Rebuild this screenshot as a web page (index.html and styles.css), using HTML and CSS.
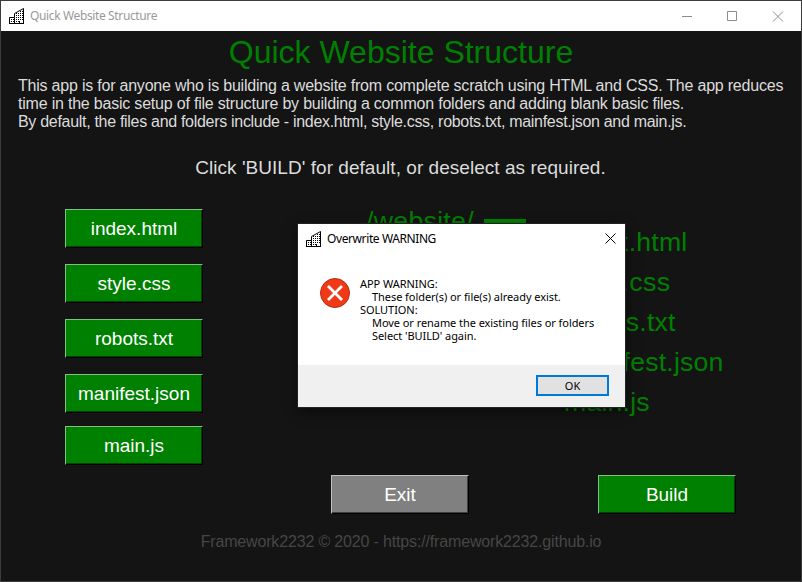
FILE: index.html
```html
<!DOCTYPE html>
<html lang="en">
<head>
<meta charset="utf-8">
<title>Quick Website Structure</title>
<link rel="stylesheet" href="styles.css">
</head>
<body>
<svg class="defs" width="0" height="0" aria-hidden="true">
  <symbol id="buildings" viewBox="0 0 16 16">
    <path d="M.5 15.500V9.500H5.500V15.500M5.500 9.500V5.500L14.500 .5V15.500M0 15.500H15M10.500 13V15" fill="none" stroke="currentColor"/>
    <path d="M2 11.500H5M2 13.500H5M11 3.500H14M7 5.500H14M7 7.500H14M7 9.500H14M7 11.500H14M7 13.500H10" fill="none" stroke="currentColor" stroke-dasharray="1 1"/>
  </symbol>
</svg>
<div class="window">
  <header class="titlebar">
    <svg class="app-icon" width="16" height="16"><use href="#buildings"/></svg>
    <span class="caption">Quick Website Structure</span>
    <svg class="controls" width="103" height="11" viewBox="0 0 103 11" fill="none" stroke="#8c8c8c"><path d="M0 5.500H10M45.500.5H54.500V9.500H45.500ZM91 .5L101 10.500M101 .5L91 10.500"/></svg>
  </header>
  <main>
    <h1>Quick Website Structure</h1>
    <div class="intro">
      <div class="i1">This app is for anyone who is building a website from complete scratch using HTML and CSS. The app reduces</div>
      <div class="i2">time in the basic setup of file structure by building a common folders and adding blank basic files.</div>
      <div class="i3">By default, the files and folders include - index.html, style.css, robots.txt, mainfest.json and main.js.</div>
    </div>
    <p class="hint">Click 'BUILD' for default, or deselect as required.</p>
    <section class="columns">
      <div class="toggles">
        <button>index.html</button>
        <button>style.css</button>
        <button>robots.txt</button>
        <button>manifest.json</button>
        <button class="last">main.js</button>
      </div>
      <div class="tree">
        <div class="root">/website/<i class="dash"></i></div>
        <div class="files">
          <div>index.html</div><div class="css">style.css</div><div>robots.txt</div><div>manifest.json</div><div>main.js</div>
        </div>
      </div>
    </section>
    <div class="actions">
      <button class="exit">Exit</button>
      <button>Build</button>
    </div>
    <footer class="credit">Framework2232 © 2020 - https://framework2232.github.io</footer>
  </main>
  <div class="dialog" role="alertdialog">
    <div class="dialog-title">
      <svg class="app-icon" width="16" height="16"><use href="#buildings"/></svg>
      <span class="caption">Overwrite WARNING</span>
      <svg class="close" width="11" height="11" viewBox="0 0 11 11" stroke="#000"><path d="M.5.5L10.500 10.500M10.500.5L.5 10.500"/></svg>
    </div>
    <div class="dialog-body">
      <svg width="30" height="30" viewBox="0 0 30 30"><circle cx="15" cy="15" r="14.500" fill="#f03a17" stroke="#b92b12"/><path d="M8 8L22 22M22 8L8 22" stroke="#fff" stroke-width="2.800"/></svg>
      <div class="message">
        <div>APP WARNING:</div>
        <div class="sub">These folder(s) or file(s) already exist.</div>
        <div>SOLUTION:</div>
        <div class="sub">Move or rename the existing files or folders</div>
        <div class="sub">Select 'BUILD' again.</div>
      </div>
    </div>
    <div class="dialog-footer"><button class="ok">OK</button></div>
  </div>
</div>
</body>
</html>
```

FILE: styles.css
```css
* { box-sizing: border-box; }
body { margin: 0; }
.defs { position: absolute; }
.window {
  width: 802px; height: 582px; overflow: hidden; position: relative;
  background: #141414; border: 1px solid #3c3c3c;
  font-family: "Liberation Sans", Arial, sans-serif; color: #dcdcdc;
}
.titlebar {
  height: 30px; background: #fff; display: flex; align-items: center;
  padding: 0 16px 0 8px; color: #000;
}
.app-icon { flex: none; }
.caption { font: 12px/16px "Noto Sans", sans-serif; white-space: nowrap; }
.titlebar .caption { color: #999; margin-left: 5px; letter-spacing: -0.37px; }
.controls { margin-left: auto; }
h1 {
  margin: 0; height: 44px; padding-top: 3px; text-align: center;
  font-size: 32px; line-height: 36px; font-weight: 400; color: #008000;
}
.intro { padding: 2px 0 0 17px; font-size: 16px; line-height: 18px; white-space: nowrap; }
.i1 { letter-spacing: -0.215px; }
.i2 { letter-spacing: -0.205px; }
.i3 { letter-spacing: -0.3px; }
.hint { margin: 26px 0 0; padding-right: 1px; text-align: center; font-size: 19px; line-height: 22px; letter-spacing: 0.04px; }
.columns { display: flex; margin-top: 30px; padding-left: 64px; height: 266px; }
.toggles { display: flex; flex-direction: column; gap: 16px; }
button {
  width: 138px; height: 39px; flex: none; padding: 1px 0 0; border: 1px solid #000;
  border-top-color: #80c080; border-left-color: #80c080;
  box-shadow: inset -1px -1px #004000;
  background: #008000; color: #fff; font: 19px "Liberation Sans", Arial, sans-serif;
}
.toggles .last { margin-top: -3px; }
.tree { margin-left: 163px; font-size: 26.67px; color: #008000; white-space: nowrap; letter-spacing: 0.2px; }
.root { height: 13px; line-height: 25px; display: flex; letter-spacing: 0.3px; }
.dash { width: 42px; height: 5px; margin: 10px 0 0 10px; background: #008000; }
.files { padding-left: 198px; line-height: 40px; }
.css { letter-spacing: 0.5px; }
.actions { display: flex; gap: 129px; padding-left: 330px; }
.exit { background: #808080; border-top-color: #c0c0c0; border-left-color: #c0c0c0; box-shadow: inset -1px -1px #404040; }
.credit { margin-top: 19px; text-align: center; font-size: 16px; line-height: 18px; letter-spacing: -0.16px; color: #464646; }
.dialog {
  position: absolute; left: 297px; top: 223px; width: 327px; height: 183px;
  display: flex; flex-direction: column; background: #fff; color: #000;
  box-shadow: 0 0 0 1px #222, 0 4px 12px rgba(0,0,0,.55);
}
.dialog-title { height: 29px; display: flex; align-items: center; padding: 0 9px 0 8px; }
.dialog-title .caption { margin-left: 5px; letter-spacing: -0.4px; }
.close { margin-left: auto; }
.dialog-body { flex: 1; display: flex; padding: 25px 0 0 22px; }
.message { margin: -1px 0 0 10px; font: 11px/13px "Noto Sans", sans-serif; letter-spacing: -0.06px; white-space: nowrap; }
.sub { padding-left: 12px; }
.dialog-footer { height: 42px; background: #f0f0f0; display: flex; justify-content: flex-end; padding: 10px 16px 0 0; }
.ok {
  width: 73px; height: 21px; border: 2px solid #0078d7; padding: 0; background: #e1e1e1;
  box-shadow: none; color: #000; font: 11px/15px "Noto Sans", sans-serif;
}
```
